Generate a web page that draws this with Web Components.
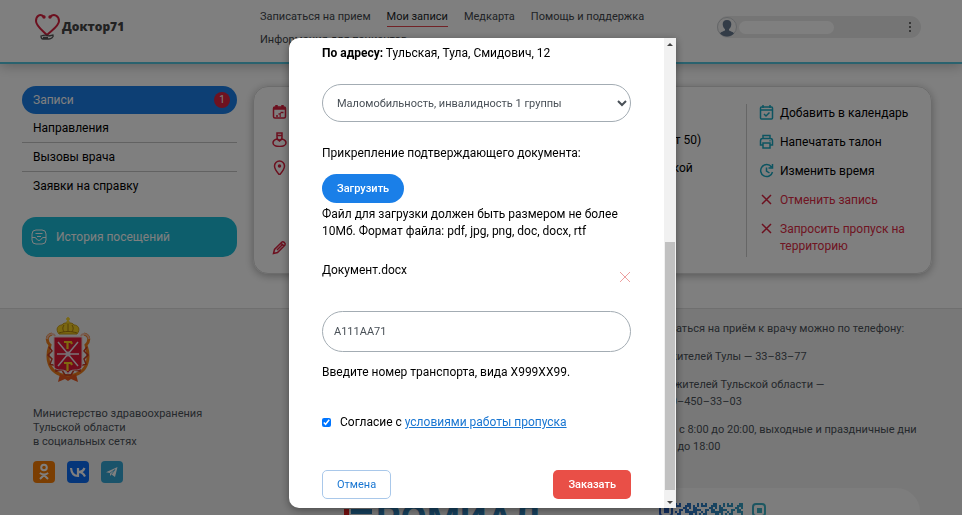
<!DOCTYPE html>
<html lang="ru">
<head>
<meta charset="utf-8">
<meta name="viewport" content="width=device-width, initial-scale=1">
<title>Доктор71</title>
<style>
  body {
    margin: 0;
    height: 100vh;
    overflow: hidden;
    background: #fff;
    color: #000;
    font: 12px/17px Roboto, "Liberation Sans", sans-serif;
  }
</style>
</head>
<body>
<page-header></page-header>
<page-main>
  <side-menu slot="side"></side-menu>
  <record-card></record-card>
</page-main>
<page-footer></page-footer>
<pass-dialog></pass-dialog>

<script>
class PageHeader extends HTMLElement {
  constructor() {
    super();
    this.attachShadow({ mode: 'open' });
  }

  connectedCallback() {
    this.shadowRoot.innerHTML = `
      <style>
        :host {
          display: block;
          border-bottom: 2px solid #54c4dd;
          box-shadow: 0 2px 12px rgba(0, 0, 0, 0.25);
        }

        header {
          display: grid;
          grid-template-columns: 225px 1fr 204px;
          box-sizing: border-box;
          min-height: 62px;
          padding: 8px 41px 5px 35px;
        }

        .logo {
          display: flex;
          align-items: center;
          align-self: start;
          gap: 2px;
          padding-top: 5px;
          color: #444;
          font: 800 12px/28px "Open Sans", sans-serif;
          text-decoration: none;
        }

        nav {
          display: flex;
          flex-wrap: wrap;
          align-content: start;
          gap: 4px 16px;
          margin-right: 30px;
          font-size: 11px;
          line-height: 18px;
        }

        nav a {
          color: #42474d;
          text-decoration: none;
          border-bottom: 1px solid transparent;
        }

        nav a.active {
          color: #212529;
          border-color: #e5454d;
        }

        .user {
          display: flex;
          align-items: center;
          align-self: start;
          height: 22px;
          margin-top: 8px;
          border-radius: 11px;
          background: #ebebeb;
        }

        .name {
          flex: 1;
          height: 13px;
          margin: 0 65px 0 2px;
          border-radius: 7px;
          background: #fff;
        }

        .user button {
          padding: 0;
          width: 22px;
          height: 22px;
          border: 0;
          background: none;
        }

        svg { display: block; }
      </style>
      <header>
        <a class="logo" href="#">
          <svg width="25" height="28" viewBox="0 0 25 28" fill="none">
            <path d="M9 4C5 0 1 3 1 8c0 5 6 9 11 14 5-5 12-9 12-14 0-5-5-8-9-4" stroke="#d9203e" stroke-width="2"/>
            <circle cx="9" cy="4" r="1.700" fill="#d9203e"/>
            <circle cx="15" cy="4" r="1.700" fill="#d9203e"/>
            <path d="M6 23c3-1 6-1 8 0l4-1c1 2-2 4-4 4H8c-2 0-2-2-2-3zm2 1.500h5" stroke="#555" stroke-width="1.300"/>
          </svg>
          Доктор71
        </a>
        <nav>
          <a href="#">Записаться на прием</a>
          <a href="#" class="active">Мои записи</a>
          <a href="#">Медкарта</a>
          <a href="#">Помощь и поддержка</a>
          <a href="#">Информация для пациентов</a>
        </nav>
        <div class="user">
          <svg width="20" height="22" viewBox="0 0 20 22">
            <circle cx="10" cy="11" r="9.500" fill="#f4f4f4" stroke="#c8ccd0"/>
            <path d="M10 4c3 0 4.500 2 4.300 4.500C14 11 13 12.500 12 13v1.500c1.500 1 4 1 5 3-2 2-4 3-7 3s-5-1-7-3c1-2 3.500-2 5-3V13c-1-.5-2-2-2.300-4.500C5.500 6 7 4 10 4z" fill="#66788f"/>
          </svg>
          <div class="name"></div>
          <button type="button" aria-label="Меню">
            <svg width="22" height="22" viewBox="0 0 22 22" fill="#444">
              <circle cx="11" cy="7" r="1"/><circle cx="11" cy="11" r="1"/><circle cx="11" cy="15" r="1"/>
            </svg>
          </button>
        </div>
      </header>
    `;
  }
}

class PageMain extends HTMLElement {
  constructor() {
    super();
    this.attachShadow({ mode: 'open' });
  }

  connectedCallback() {
    this.shadowRoot.innerHTML = `
      <style>
        :host {
          display: grid;
          grid-template-columns: 215px 1fr;
          align-items: start;
          gap: 16px;
          padding: 22px 30px 34px 22px;
        }
      </style>
      <slot name="side"></slot>
      <slot></slot>
    `;
  }
}

class SideMenu extends HTMLElement {
  constructor() {
    super();
    this.attachShadow({ mode: 'open' });
  }

  connectedCallback() {
    this.shadowRoot.innerHTML = `
      <style>
        :host { display: block; }

        nav {
          display: flex;
          flex-direction: column;
        }

        a {
          display: flex;
          align-items: center;
          height: 28px;
          padding: 0 11px;
          color: #000;
          text-decoration: none;
        }

        a.line { border-bottom: 1px solid #c4c4c4; }

        a.active {
          justify-content: space-between;
          padding-right: 7px;
          border-radius: 14px;
          background: #1a7fe8;
          color: #fff;
        }

        .badge {
          width: 16px;
          border-radius: 8px;
          background: #dc2440;
          font-size: 10px;
          line-height: 16px;
          text-align: center;
        }

        a.history {
          gap: 9px;
          height: 40px;
          margin-top: 17px;
          padding: 0 9px;
          border-radius: 14px;
          background: #1bbcd8;
          color: #fff;
        }
      </style>
      <nav>
        <a href="#" class="active">Записи <span class="badge">1</span></a>
        <a href="#" class="line">Направления</a>
        <a href="#" class="line">Вызовы врача</a>
        <a href="#">Заявки на справку</a>
        <a href="#" class="history">
          <svg width="16" height="16" viewBox="0 0 16 16" fill="none" stroke="#fff">
            <rect x="1" y="1" width="14" height="14" rx="4"/>
            <path d="M1 8.500h3c1.500 0 1.500 3 4 3s2.500-3 4-3h3M4.500 4.500h7M6 7.500h4"/>
          </svg>
          История посещений
        </a>
      </nav>
    `;
  }
}

const ICONS = {
  date: '<rect x="1.5" y="3" width="12" height="11" rx="1.5"/><path d="M1.500 4.500h12M4.500 1v3M10.500 1v3" stroke-width="2.500"/><path d="M8.500 8.500h3M6.500 10h2.500M4 12h2M7.500 12h1.500"/>',
  doctor: '<path d="M5 1h5v4c0 2-1.500 3-2.500 3S5 7 5 5zM5 3.500h5"/><path d="M5 7c-2 .5-4 2-4 4 0 2 3 3.500 6.500 3.500S14 13 14 11c0-2-2-3.500-4-4L7.500 9z"/>',
  pin: '<path d="M7.500 15C4 11 2.500 8.500 2.500 6a5 5 0 0 1 10 0c0 2.500-1.500 5-5 9z"/><circle cx="7.500" cy="6" r="1" fill="currentColor"/>',
  pencil: '<path d="M1.500 13.500l1-4 7.500-7.500c1-1 4 1 3 3l-7.500 7.500zM9 3l3 3M5 10l5-5"/>',
  calendar: '<rect x="1.5" y="2" width="12" height="12" rx="1"/><path d="M1.500 5h12M4 0v3M11 0v3M5 9l2 2 3.500-3.500"/>',
  print: '<path d="M4 4.500V1.500h7v3M4 11H1.500V7c0-1.500 1-2.500 2-2.500h8c1 0 2 1 2 2.500v4H11M4 9h7v5H4zM10.500 6.800h1"/>',
  clock: '<path d="M12.500 4A6 6 0 1 0 13.500 9M13.500 1v4h-4M7.500 4.500V8l3 2"/>',
  cross: '<path d="M3 3l9 9M12 3l-9 9"/>'
};

class LineIcon extends HTMLElement {
  constructor() {
    super();
    this.attachShadow({ mode: 'open' });
  }

  connectedCallback() {
    this.shadowRoot.innerHTML = `
      <style>
        :host { display: block; flex-shrink: 0; }
        svg { display: block; }
      </style>
      <svg width="15" height="15" viewBox="0 0 15 15" fill="none" stroke="currentColor"
        stroke-width="1.500">${ICONS[this.getAttribute('name')]}</svg>
    `;
  }
}

class RecordCard extends HTMLElement {
  constructor() {
    super();
    this.attachShadow({ mode: 'open' });
  }

  connectedCallback() {
    this.shadowRoot.innerHTML = `
      <style>
        :host {
          display: grid;
          grid-template-columns: 1fr 185px;
          box-sizing: border-box;
          min-height: 188px;
          padding: 17px 0 16px 18px;
          border: 1px solid #d8d8d8;
          border-radius: 15px;
          box-shadow: 0 2px 8px rgba(0, 0, 0, 0.3);
        }

        .details {
          display: grid;
          grid-template-columns: 15px 115px;
          grid-template-rows: 17px 17px 17px 17px;
          justify-content: space-between;
          gap: 11px 9px;
        }

        .details line-icon { color: #d9203e; }
        .details .last { margin-top: 52px; }

        .actions {
          display: flex;
          flex-direction: column;
          gap: 12px;
          padding: 1px 11px 0 12px;
          border-left: 1px solid #ccc;
        }

        .actions a {
          display: flex;
          align-items: flex-start;
          gap: 6px;
          color: #000;
          text-decoration: none;
        }

        .actions a.danger { color: #e02a44; }
        .actions line-icon { color: #1aa9c2; }
        .actions .danger line-icon { color: #d9203e; }
      </style>
      <div class="details">
        <line-icon name="date"></line-icon><span></span>
        <line-icon name="doctor"></line-icon><span>(кабинет 50)</span>
        <line-icon name="pin"></line-icon><span>в Тульской</span>
        <line-icon name="pencil" class="last"></line-icon><span></span>
      </div>
      <div class="actions">
        <a href="#"><line-icon name="calendar"></line-icon>Добавить в календарь</a>
        <a href="#"><line-icon name="print"></line-icon>Напечатать талон</a>
        <a href="#"><line-icon name="clock"></line-icon>Изменить время</a>
        <a href="#" class="danger"><line-icon name="cross"></line-icon>Отменить запись</a>
        <a href="#" class="danger"><line-icon name="cross"></line-icon>Запросить пропуск на территорию</a>
      </div>
    `;
  }
}

class PageFooter extends HTMLElement {
  constructor() {
    super();
    this.attachShadow({ mode: 'open' });
  }

  // short scattered strokes between the two code corners
  codePattern() {
    let cells = '';
    for (let y = 0; y < 8; y++) {
      for (let x = 0; x < 34; x++) {
        if ((x * x * 7 + y * y * 5 + x * y * 3) % 13 < 6) {
          cells += `<rect x="${17 + x * 2}" y="${y * 2}" width="2" height="2"/>`;
        }
      }
    }
    return cells;
  }

  connectedCallback() {
    this.shadowRoot.innerHTML = `
      <style>
        :host {
          display: grid;
          grid-template-columns: 311px 1fr 280px;
          min-height: 207px;
          padding: 0 42px 0 33px;
          border-top: 1px solid #dedede;
          background: #f1f1f1;
          color: #4b5259;
          font-size: 11px;
        }

        .emblem { display: block; margin: 7px 0 23px 12px; }

        .ministry {
          margin: 0;
          line-height: 14px;
        }

        .social {
          display: flex;
          gap: 12px;
          margin-top: 12px;
        }

        .social a, .social svg { display: block; }

        .brand {
          display: flex;
          gap: 4px;
          margin-top: 191px;
          color: #2c7fb8;
          font-size: 38px;
          font-weight: 700;
          line-height: 38px;
        }

        .phones { padding-top: 11px; }
        .phones p { margin: 0 0 11px; padding-left: 5px; }
        .phones a { color: inherit; text-decoration: none; white-space: nowrap; }

        .banner {
          height: 60px;
          margin-top: 33px;
          padding: 15px 18px;
          border-radius: 24px;
          background: #fbfbfb;
        }
      </style>
      <div>
        <svg class="emblem" width="46" height="68" viewBox="0 0 46 68">
          <path d="M7 18c-7 2-5 8-2 11-2 6-3 12-1 18 2 7 8 12 19 13 11-1 17-6 19-13 2-6 1-12-1-18 3-3 5-9-2-11" fill="none" stroke="#ef7d1a" stroke-width="3"/>
          <path d="M4 31l3 4-4 4 4 4-2 5 6 2 0 5 6-1 3 5h6l3-5 6 1v-5l6-2-2-5 4-4-4-4 3-4" fill="none" stroke="#c83b22" stroke-width="1.500"/>
          <path d="M15 58l-2 8 7-3 3 2 3-2 7 3-2-8-8 3z" fill="#e8571f"/>
          <path d="M2 23c1-6 7-6 8-3M44 23c-1-6-7-6-8-3" fill="none" stroke="#f1b8a0" stroke-width="2"/>
          <path d="M9 21h28v28c0 4-3 5-7 5-4 0-6 1-7 4-1-3-3-4-7-4-4 0-7-1-7-5z" fill="#e01837" stroke="#f2c8c8"/>
          <path d="M13 26l20 24M33 26L13 50M12 38h22" stroke="#f5e9ee" stroke-width="1.500"/>
          <circle cx="23" cy="38" r="2.500" fill="#e9d8e6"/>
          <path d="M19 26h7l1 2M22.500 25v8M19 47h7l1 2M22.500 46v9" fill="none" stroke="#ffd21f" stroke-width="2.200"/>
          <path d="M14 18c-4-5-1-9 3-9 1-3 11-3 12 0 4 0 7 4 3 9z" fill="#f5cf22" stroke="#c99a13"/>
          <path d="M14 17c6-2 12-2 18 0M19 9c-2 3-1 5 0 7M27 9c2 3 1 5 0 7M23 7v9" fill="none" stroke="#a97c10"/>
          <path d="M23 1v6M21 3h4" stroke="#f5cf22" stroke-width="1.500"/>
          <circle cx="23" cy="6" r="1.700" fill="#f5cf22"/>
        </svg>
        <p class="ministry">Министерство здравоохранения<br>Тульской области<br>в социальных сетях</p>
        <div class="social">
          <a href="#" aria-label="Одноклассники">
            <svg width="22" height="22" viewBox="0 0 22 22" fill="none" stroke="#fff" stroke-width="2">
              <rect width="22" height="22" rx="4" fill="#f77d04" stroke="none"/>
              <circle cx="11" cy="6.500" r="2.800"/>
              <path d="M6.800 12c2.500 1.700 6 1.700 8.400 0M11 14l-4 4M11 14l4 4"/>
            </svg>
          </a>
          <a href="#" aria-label="ВКонтакте">
            <svg width="22" height="22" viewBox="0 0 22 22" fill="none" stroke="#fff" stroke-width="2.200">
              <rect width="22" height="22" rx="4" fill="#0a6cf5" stroke="none"/>
              <path d="M4 7c.5 5.500 3 8 7 8V7M17.500 7c-1 2.500-3 4-6 4 3 0 5 1.500 6.500 4.500"/>
            </svg>
          </a>
          <a href="#" aria-label="Telegram">
            <svg width="22" height="22" viewBox="0 0 22 22">
              <rect width="22" height="22" rx="4" fill="#34a6d4"/>
              <path d="M5 11.300L16.500 6 14 16l-3.500-2.500L9 15v-3z" fill="#fff"/>
              <path d="M9 12l5-3.500-3.500 5" fill="none" stroke="#34a6d4" stroke-width=".7"/>
            </svg>
          </a>
        </div>
      </div>
      <div class="brand">
        <svg width="28" height="36" viewBox="0 0 28 36">
          <rect y="9" width="5" height="20" fill="#e21d1d"/>
          <path d="M7 9h21v5H7z" fill="#2c7fb8"/>
        </svg>
        РОМИАД
      </div>
      <div class="phones">
        <p>Записаться на приём к врачу можно по телефону:</p>
        <p>Для жителей Тулы — <a href="tel:338377">33–83–77</a></p>
        <p>Для &nbsp;&nbsp;жителей Тульской области —<br><a href="tel:88004503303">8–800–450–33–03</a></p>
        <p>Будни с 8:00 до 20:00, выходные и праздничные дни<br>с 9:00 до 18:00</p>
        <div class="banner">
          <svg width="108" height="16" viewBox="0 0 108 16">
            <defs>
              <linearGradient id="code" gradientUnits="userSpaceOnUse" x1="0" y1="0" x2="108" y2="0">
                <stop offset="0" stop-color="#2357bd"/>
                <stop offset="1" stop-color="#3db4c4"/>
              </linearGradient>
            </defs>
            <g fill="none" stroke="url(#code)" stroke-width="2">
              <rect x="2" y="1" width="12" height="12" rx="3"/>
              <rect x="95" y="1" width="12" height="12" rx="3"/>
            </g>
            <g fill="url(#code)">
              <rect x="6" y="5" width="5" height="5"/>
              <rect x="99" y="5" width="5" height="5"/>
              ${this.codePattern()}
            </g>
          </svg>
        </div>
      </div>
    `;
  }
}

class ScrollStrip extends HTMLElement {
  constructor() {
    super();
    this.attachShadow({ mode: 'open' });
  }

  connectedCallback() {
    this.shadowRoot.innerHTML = `
      <style>
        :host {
          display: flex;
          flex-direction: column;
          width: 12px;
          background: #f1f1f1;
        }

        svg { display: block; width: 12px; height: 18px; }
        .space { flex: 186; }
        .thumb { flex: 248; margin: 0 1px; background: #c1c1c1; }
      </style>
      <svg viewBox="0 0 12 18"><path d="M3 8l3-3 3 3z" fill="#444"/></svg>
      <div class="space"></div>
      <div class="thumb"></div>
      <svg viewBox="0 0 12 18"><path d="M3 11l3 3 3-3z" fill="#444"/></svg>
    `;
  }
}

class PassDialog extends HTMLElement {
  constructor() {
    super();
    this.attachShadow({ mode: 'open' });
  }

  connectedCallback() {
    this.render();
    this.bindEvents();
  }

  render() {
    this.shadowRoot.innerHTML = `
      <style>
        :host {
          position: fixed;
          inset: 0;
          z-index: 10;
          display: flex;
          align-items: flex-start;
          justify-content: center;
          padding: 38px 0 0 3px;
          background: rgba(0, 0, 0, 0.5);
        }

        :host([hidden]) { display: none; }

        .window {
          display: flex;
          width: 387px;
          max-width: 100%;
          border-radius: 10px 0 0 10px;
          background: #fff;
          overflow: hidden;
          box-shadow: 0 2px 8px rgba(0, 0, 0, 0.4);
        }

        form {
          flex: 1;
          display: flex;
          flex-direction: column;
          padding: 7px 33px 9px;
        }

        p { margin: 0; }

        select, input, button {
          box-sizing: border-box;
          font: inherit;
          font-size: 11px;
        }

        select, .number {
          width: 100%;
          border: 1px solid #a3acb3;
          background: #fff;
          color: #495057;
        }

        select {
          height: 38px;
          margin: 22px 0 23px;
          padding: 0 0 0 10px;
          border-radius: 19px;
        }

        .number {
          height: 41px;
          margin: 32px 0 12px;
          padding: 0 11px;
          border-radius: 21px;
        }

        button {
          height: 29px;
          padding: 0 14px;
          border: 1px solid transparent;
          border-radius: 5px;
        }

        .upload {
          align-self: flex-start;
          margin: 12px 0 3px;
          border-radius: 15px;
          background: #1a7fe8;
          color: #fff;
          font-weight: 500;
        }

        .file {
          display: flex;
          justify-content: space-between;
          height: 17px;
          margin-top: 22px;
        }

        .file button {
          align-self: flex-end;
          width: 12px;
          height: 12px;
          margin-bottom: -4px;
          padding: 0;
          border: 0;
          background: none;
        }

        .file svg { display: block; }

        .agree {
          display: flex;
          align-items: center;
          gap: 9px;
          margin: 33px 0 39px;
        }

        .agree input { width: 9px; height: 9px; margin: 0; }
        .agree a { color: #1976d2; }

        .buttons {
          display: flex;
          justify-content: space-between;
        }

        .cancel {
          border-color: #a9c8ea;
          background: #fff;
          color: #1976d2;
        }

        .order {
          background: #e94f47;
          color: #fff;
          font-weight: 500;
        }
      </style>
      <div class="window" role="dialog" aria-label="Пропуск на территорию">
        <form>
          <p><b>По адресу:</b> Тульская, Тула, Смидович, 12</p>
          <select aria-label="Причина">
            <option>Маломобильность, инвалидность 1 группы</option>
          </select>
          <p>Прикрепление подтверждающего документа:</p>
          <button type="button" class="upload">Загрузить</button>
          <p>Файл для загрузки должен быть размером не более 10Мб. Формат файла: pdf, jpg, png, doc, docx, rtf</p>
          <div class="file">
            <span>Документ.docx</span>
            <button type="button" aria-label="Удалить файл">
              <svg width="12" height="12" viewBox="0 0 12 12" stroke="#eda0a0"><path d="M1 1l10 10M11 1L1 11"/></svg>
            </button>
          </div>
          <input class="number" id="number" type="text" value="А111АА71">
          <label for="number">Введите номер транспорта, вида Х999ХХ99.</label>
          <div class="agree">
            <input id="agree" type="checkbox" checked>
            <label for="agree">Согласие с <a href="#">условиями работы пропуска</a></label>
          </div>
          <div class="buttons">
            <button type="button" class="cancel">Отмена</button>
            <button type="submit" class="order">Заказать</button>
          </div>
        </form>
        <scroll-strip></scroll-strip>
      </div>
    `;
  }

  bindEvents() {
    const root = this.shadowRoot;
    root.querySelector('.cancel').addEventListener('click', () => this.hidden = true);
    root.querySelector('.file button').addEventListener('click', () => root.querySelector('.file').remove());
    root.querySelector('form').addEventListener('submit', (e) => e.preventDefault());
  }
}

customElements.define('line-icon', LineIcon);
customElements.define('page-header', PageHeader);
customElements.define('page-main', PageMain);
customElements.define('side-menu', SideMenu);
customElements.define('record-card', RecordCard);
customElements.define('page-footer', PageFooter);
customElements.define('scroll-strip', ScrollStrip);
customElements.define('pass-dialog', PassDialog);
</script>
</body>
</html>
